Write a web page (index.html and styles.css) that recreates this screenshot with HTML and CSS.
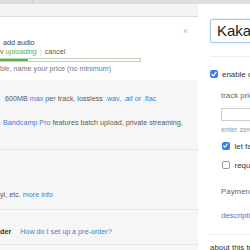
FILE: index.html
```html
<!DOCTYPE html>
<html>
<head>
    <meta charset="UTF-8">
    <title>edit track</title>
    <link rel="stylesheet" href="styles.css">
</head>
<body>
    <div class="topbar">
        <span class="tab first"></span>
        <span class="tab"></span>
    </div>

    <div class="layout">
        <div class="left">
            <div class="strip"></div>

            <div class="card">
                <div class="close-row"><span class="close">×</span></div>
                <div class="add-audio">add audio</div>
                <div class="status">
                    v <span class="uploading">uploading</span>
                    <span class="pipe">|</span> cancel
                </div>
                <div class="progress"><div class="progress-fill" style="width: 28px"></div></div>
                <div class="price-note">ble, name your price (no minimum)</div>
            </div>

            <div class="panel">
                <div class="section first">
                    <div class="line indent">600MB <a href="#">max</a> per track, lossless <a href="#">.wav, .aif or .flac</a></div>
                    <div class="line second"><a href="#">Bandcamp Pro</a> features batch upload, private streaming,</div>
                </div>
                <div class="section merch">
                    <div class="line">yl, etc. <a href="#">more info</a></div>
                </div>
                <div class="section preorder">
                    <div class="line"><b>der</b><a class="help" href="#">How do I set up a pre-order?</a></div>
                </div>
            </div>
        </div>

        <div class="right">
            <div class="title-input">Kakaako Nights</div>
            <div class="sep"></div>

            <div class="check-row main">
                <span class="checkbox checked">
                    <svg width="8" height="8" viewBox="0 0 8 8"><path d="M1.6 4.2 L3.3 5.9 L6.4 2" fill="none" stroke="#fff" stroke-width="1.3"/></svg>
                </span>
                <span class="label">enable downloads</span>
            </div>

            <div class="sub">
                <div class="field-label">track price</div>
                <div class="price-input"></div>
                <div class="hint">enter zero or more</div>

                <div class="check-row fans">
                    <span class="checkbox checked small">
                        <svg width="7" height="7" viewBox="0 0 8 8"><path d="M1.6 4.2 L3.3 5.9 L6.4 2" fill="none" stroke="#fff" stroke-width="1.3"/></svg>
                    </span>
                    <span class="label">let fans pay more if they want</span>
                </div>
                <div class="check-row email">
                    <span class="checkbox small"></span>
                    <span class="label">require email address</span>
                </div>

                <div class="field-label payment">Payment will be sent to</div>
                <a class="desc-link" href="#">description</a>
            </div>

            <div class="sep bottom"></div>
            <div class="about">about this track</div>
        </div>
    </div>
</body>
</html>
```

FILE: styles.css
```css
:root {
    --link: #3f7cd4;
    --text: #5a5a5a;
    --dark: #333;
    --line: #e6e6e6;
}

body {
    margin: 0;
    width: 250px;
    height: 250px;
    overflow: hidden;
    background: #fff;
    font-family: "Liberation Sans", Arial, sans-serif;
    font-size: 7.2px;
    line-height: 9px;
    color: var(--text);
}

a {
    color: var(--link);
    text-decoration: none;
}

.topbar {
    height: 4px;
    background: #dedede;
    display: flex;
}

.tab {
    width: 17px;
    height: 2px;
    border-right: 1px solid #c9c9c9;
}

.tab.first {
    width: 32px;
}

.layout {
    display: flex;
    height: 246px;
}

.left {
    width: 198px;
    flex: none;
    display: flex;
    flex-direction: column;
    background: #f6f6f6;
}

.strip {
    height: 12px;
    background: #f4f4f4;
    border-bottom: 1px solid #dcdcdc;
}

.card {
    background: #fff;
    padding: 9px 0 7px;
    white-space: nowrap;
}

.close-row {
    height: 10px;
    line-height: 10px;
    text-align: right;
    padding-right: 10px;
}

.close {
    font-size: 9px;
    color: #bdbdbd;
}

.add-audio {
    margin-top: 2px;
    padding-left: 3px;
    color: #444;
}

.uploading {
    color: #5fae4a;
    font-style: italic;
}

.pipe {
    color: #ccc;
    margin: 0 1px;
}

.progress {
    margin-top: 2px;
    width: 141px;
    height: 4px;
    box-sizing: border-box;
    border: 1px solid #bcd2b4;
    border-left: none;
    background: #fff;
}

.progress-fill {
    height: 100%;
    background: #5cb04a;
}

.price-note {
    margin-top: 2px;
    color: #777;
}

.panel {
    flex: 1;
    white-space: nowrap;
}

.section {
    border-bottom: 1px solid var(--line);
}

.section.first {
    padding: 14px 0 22px;
}

.line.indent {
    padding-left: 5px;
}

.line.second {
    margin-top: 15px;
    padding-left: 3px;
}

.section.merch {
    padding: 40px 0 10px;
}

.section.preorder {
    padding: 17px 0 8px;
}

.preorder b {
    color: var(--dark);
}

.help {
    margin-left: 9px;
}

.right {
    flex: 1;
    min-width: 0;
    padding-left: 12px;
    white-space: nowrap;
    overflow: hidden;
    color: var(--dark);
    font-size: 7.9px;
}

.title-input {
    margin-top: 15px;
    width: 120px;
    height: 24px;
    box-sizing: border-box;
    border: 1px solid #a8c5ea;
    border-radius: 2px;
    box-shadow: 0 0 2px #cfe0f5;
    padding-left: 6px;
    font-size: 15px;
    line-height: 22px;
    color: #222;
}

.sep {
    margin-top: 13px;
    border-top: 1px solid #ededed;
}

.check-row {
    display: flex;
    align-items: center;
    gap: 4px;
    height: 8px;
}

.check-row.main {
    margin-top: 13px;
}

.checkbox {
    width: 8px;
    height: 8px;
    flex: none;
    box-sizing: border-box;
    border: 1px solid #9a9a9a;
    border-radius: 2px;
    background: #fff;
    display: flex;
}

.checkbox.checked {
    border: none;
    background: #3a7ff2;
}

.checkbox.small {
    width: 7.5px;
    height: 7.5px;
}

.sub {
    padding-left: 11px;
}

.field-label {
    margin-top: 13px;
    color: #666;
}

.price-input {
    margin-top: 8px;
    width: 80px;
    height: 13px;
    box-sizing: border-box;
    border: 1px solid #cfcfcf;
}

.hint {
    margin-top: 5px;
    font-size: 7.2px;
    line-height: 8px;
    color: #999;
}

.sub .check-row {
    padding-left: 1px;
    gap: 5px;
}

.check-row.fans {
    margin-top: 8px;
}

.check-row.email {
    margin-top: 11px;
}

.field-label.payment {
    margin-top: 18px;
}

.desc-link {
    display: block;
    margin-top: 15px;
}

.sep.bottom {
    margin-top: 14px;
    margin-left: -1px;
}

.about {
    margin-top: 8px;
}
```
